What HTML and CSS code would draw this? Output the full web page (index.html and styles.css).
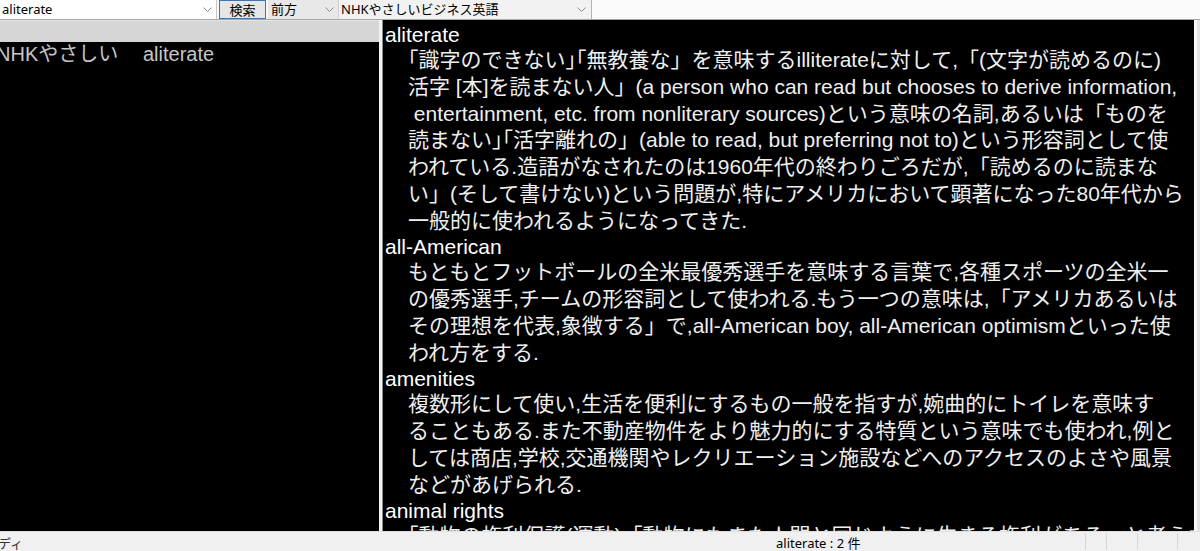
FILE: index.html
```html
<!DOCTYPE html>
<html lang="ja">
<head>
<meta charset="utf-8">
<title>辞書</title>
<link rel="stylesheet" href="styles.css">
</head>
<body>
<div class="app">
  <div class="toolbar">
    <div class="combo combo-search">
      <span class="val">aliterate</span>
      <span class="arrow"><svg width="9" height="5" viewBox="0 0 9 5"><path d="M0.5 0.5 L4.5 4.5 L8.5 0.5" fill="none" stroke="#8a8a8a" stroke-width="1"/></svg></span>
    </div>
    <button class="btn">検索</button>
    <div class="combo combo-dir">
      <span class="val">前方</span>
      <span class="arrow"><svg width="9" height="5" viewBox="0 0 9 5"><path d="M0.5 0.5 L4.5 4.5 L8.5 0.5" fill="none" stroke="#8a8a8a" stroke-width="1"/></svg></span>
    </div>
    <div class="combo combo-dict">
      <span class="val">NHKやさしいビジネス英語</span>
      <span class="arrow"><svg width="9" height="5" viewBox="0 0 9 5"><path d="M0.5 0.5 L4.5 4.5 L8.5 0.5" fill="none" stroke="#8a8a8a" stroke-width="1"/></svg></span>
    </div>
    <div class="toolbar-rest"></div>
  </div>

  <div class="main">
    <div class="left">
      <div class="list-header"></div>
      <div class="list">
        <div class="row"><span class="c1">NHKやさしい</span><span class="c2">aliterate</span></div>
      </div>
    </div>
    <div class="splitter"></div>
    <div class="right">
      <div class="content">
        <div class="entry">
          <div class="hw">aliterate</div>
          <div class="line"><span class="ob">「</span>識字のできない<span class="cb">」</span><span class="ob">「</span>無教養な」を意味するilliterateに対して,「(文字が読めるのに)</div>
          <div class="line">活字 [本]を読まない人」(a person who can read but chooses to derive information,</div>
          <div class="line"> entertainment, etc. from nonliterary sources)という意味の名詞,あるいは「ものを</div>
          <div class="line">読まない<span class="cb">」</span><span class="ob">「</span>活字離れの」(able to read, but preferring not to)という形容詞として使</div>
          <div class="line">われている.造語がなされたのは1960年代の終わりごろだが,「読めるのに読まな</div>
          <div class="line">い」(そして書けない)という問題が,特にアメリカにおいて顕著になった80年代から</div>
          <div class="line">一般的に使われるようになってきた.</div>
        </div>
        <div class="entry">
          <div class="hw">all-American</div>
          <div class="line">もともとフットボールの全米最優秀選手を意味する言葉で,各種スポーツの全米一</div>
          <div class="line">の優秀選手,チームの形容詞として使われる.もう一つの意味は,「アメリカあるいは</div>
          <div class="line">その理想を代表,象徴する」で,all-American boy, all-American optimismといった使</div>
          <div class="line">われ方をする.</div>
        </div>
        <div class="entry">
          <div class="hw">amenities</div>
          <div class="line">複数形にして使い,生活を便利にするもの一般を指すが,婉曲的にトイレを意味す</div>
          <div class="line">ることもある.また不動産物件をより魅力的にする特質という意味でも使われ,例と</div>
          <div class="line">しては商店,学校,交通機関やレクリエーション施設などへのアクセスのよさや風景</div>
          <div class="line">などがあげられる.</div>
        </div>
        <div class="entry">
          <div class="hw">animal rights</div>
          <div class="line"><span class="ob">「</span>動物の権利保護(運動)<span class="cb">」</span><span class="ob">「</span>動物にもまた人間と同じように生きる権利がある」と考えた</div>
        </div>
      </div>
      <div class="edge"></div>
    </div>
  </div>

  <div class="status">
    <div class="s-panel s-left">ディ</div>
    <div class="s-panel s-count">aliterate : 2 件</div>
    <div class="s-panel s-sep s-a"></div>
    <div class="s-panel s-sep s-b"></div>
    <div class="s-panel s-sep s-c"></div>
    <div class="s-panel s-sep s-d"></div>
  </div>
</div>
</body>
</html>
```

FILE: styles.css
```css
html, body {
  margin: 0;
  padding: 0;
}

body {
  width: 1200px;
  height: 551px;
  overflow: hidden;
  background: #f0f0f0;
  font-family: "Noto Sans", "Noto Sans CJK JP", sans-serif;
}

.app {
  display: flex;
  flex-direction: column;
  height: 551px;
}

/* ---------- toolbar ---------- */
.toolbar {
  display: flex;
  height: 19px;
  border-bottom: 1px solid #a6a6a6;
  background: #f7f7f7;
  font-family: "Noto Sans", "Noto Sans CJK JP", sans-serif;
  font-size: 13px;
  color: #000;
}

.combo {
  display: flex;
  align-items: center;
  box-sizing: border-box;
  height: 19px;
  flex: none;
}

.combo .val {
  flex: 1;
  padding-left: 3px;
  white-space: nowrap;
  overflow: hidden;
  line-height: 19px;
}

.arrow {
  width: 18px;
  display: flex;
  justify-content: center;
  align-items: center;
}

.combo-search {
  width: 217px;
  background: #ffffff;
  border-right: 1px solid #c6c6c6;
}

.combo-search .val {
  padding-left: 2px;
}

.btn {
  flex: none;
  margin-left: 2px;
  width: 47px;
  height: 19px;
  box-sizing: border-box;
  padding: 0;
  border: 1px solid #2a7ad0;
  background: #e6e6e6;
  font-family: "Noto Sans CJK JP", sans-serif;
  font-size: 13px;
  line-height: 16px;
  color: #000;
}

.combo-dir {
  margin-left: 2px;
  width: 70px;
  background: #e8e8e8;
}

.combo-dir .val {
  padding-left: 3px;
}

.combo-dict {
  width: 254px;
  background: #f2f2f2;
  border-left: 1px solid #cfcfcf;
  border-right: 1px solid #b4b4b4;
}

.combo-dict .val {
  padding-left: 2px;
}

.combo-dict .arrow {
  width: 20px;
}

.toolbar-rest {
  flex: 1;
  background: #fbfbfb;
}

/* ---------- main panes ---------- */
.main {
  display: flex;
  height: 511px;
}

.left {
  flex: none;
  width: 379px;
  display: flex;
  flex-direction: column;
  background: #000;
}

.list-header {
  height: 22px;
  background: #d6d6d6;
  border-top: 1px solid #e2e2e2;
  box-sizing: border-box;
}

.list {
  flex: 1;
  overflow: hidden;
  color: #c6c6c6;
  font-family: "Liberation Sans", "Noto Sans CJK JP", sans-serif;
  font-size: 20px;
}

.row {
  display: flex;
  height: 24px;
  line-height: 24px;
  white-space: nowrap;
}

.c1 {
  width: 147px;
  margin-left: -4px;
  flex: none;
}

.splitter {
  flex: none;
  width: 3px;
  background: #f2f2f2;
}

.right {
  flex: 1;
  min-width: 0;
  display: flex;
  background: #000;
  border-left: 1px solid #8e8e8e;
}

.content {
  flex: 1;
  min-width: 0;
  overflow: hidden;
  padding: 2px 0 0 2px;
  color: #efefef;
  font-family: "Liberation Sans", "Noto Sans CJK JP", sans-serif;
  font-size: 21px;
  text-spacing-trim: space-all;
}

.hw {
  height: 25px;
  line-height: 25px;
  white-space: pre;
  color: #ffffff;
}

.line {
  height: 26.75px;
  line-height: 26.75px;
  padding-left: 23px;
  white-space: pre;
}

/* half-width punctuation: trimmed opening bracket at line start,
   and collapsed bracket pairs */
.ob {
  margin-left: -0.5em;
}

.cb {
  margin-right: -0.5em;
}

.edge {
  flex: none;
  width: 6px;
  background: linear-gradient(to right, #fafafa 0 3px, #e4e4e4 3px 6px);
}

/* ---------- status bar ---------- */
.status {
  display: flex;
  height: 20px;
  box-sizing: border-box;
  border-top: 1px solid #dedede;
  background: #f0f0f0;
  font-family: "Noto Sans", "Noto Sans CJK JP", sans-serif;
  font-size: 13px;
  line-height: 18px;
  color: #000;
}

.s-panel {
  flex: none;
  white-space: nowrap;
  overflow: hidden;
  padding-top: 2px;
}

.s-left {
  width: 776px;
  text-indent: -2px;
  color: #333;
}

.s-count {
  width: 309px;
}

.s-sep {
  border-left: 1px solid #d6d6d6;
  margin: 1px 0 1px;
  box-sizing: border-box;
}

.s-a { width: 21px; }
.s-b { width: 31px; }
.s-c { width: 40px; }
.s-d { flex: 1; }
```
